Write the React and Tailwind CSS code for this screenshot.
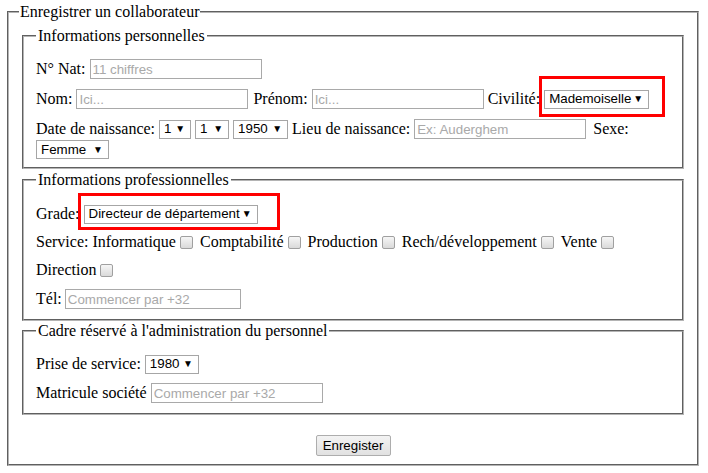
import React from 'react';

const ctrlFont = "font-['Liberation_Sans',Arial,sans-serif] text-[13.33px] text-black";

const TextBox = ({ placeholder, w = 'w-[172px]' }) => (
    <input
        type="text"
        placeholder={placeholder}
        className={`${ctrlFont} ${w} h-[20px] shrink-0 border border-[#a9a9a9] bg-white px-[2px] placeholder:text-[#a9a9a9] outline-none`}
    />
);

const Select = ({ value, w }) => (
    <span className={`${ctrlFont} ${w} h-[19px] shrink-0 inline-flex items-center justify-between border border-[#a6a6a6] bg-white pl-[4px] pr-[5px] leading-none`}>
        <span>{value}</span>
        <span className="text-[10px]">▼</span>
    </span>
);

const Check = ({ last }) => (
    <span className={`inline-block w-[13px] h-[13px] shrink-0 rounded-[2px] border border-[#a0a0a0] bg-gradient-to-b from-[#f6f6f6] to-[#dadada] ${last ? '' : 'mr-[3px]'}`} />
);

const Legend = ({ children, outer }) => (
    <legend className={`leading-[18px] ${outer ? 'ml-[-3px] px-[1px]' : 'px-[2px]'}`}>{children}</legend>
);

const fsBorder = 'border-2 border-[#b4b4b4] [border-style:groove]';

export default function App() {
    return (
        <div className="relative min-h-[473px] bg-white pl-[7px] pr-[9px] pt-[3px] font-['Liberation_Serif','Times_New_Roman',serif] text-[16px] text-black">
            <fieldset className={`${fsBorder} px-[13px] pt-[6px] pb-[8px]`}>
                <Legend outer>Enregistrer un collaborateur</Legend>

                {/* Informations personnelles */}
                <fieldset className={`${fsBorder} px-[12px] pt-[14px] pb-[8px]`}>
                    <Legend>Informations personnelles</Legend>
                    <div className="flex h-[20px] items-center gap-x-[4px]">
                        <span>N° Nat:</span>
                        <TextBox placeholder="11 chiffres" />
                    </div>
                    <div className="mt-[10px] flex h-[20px] items-center gap-x-[4px]">
                        <span>Nom:</span>
                        <TextBox placeholder="Ici..." />
                        <span className="ml-[1px]">Prénom:</span>
                        <TextBox placeholder="Ici..." />
                        <span>Civilité:</span>
                        <Select value="Mademoiselle" w="w-[105px]" />
                    </div>
                    <div className="mt-[10px] flex flex-wrap items-center gap-x-[4px] gap-y-[1px]">
                        <span className="leading-[20px]">Date de naissance:</span>
                        <Select value="1" w="w-[32px]" />
                        <Select value="1" w="w-[34px]" />
                        <Select value="1950" w="w-[55px]" />
                        <span className="leading-[20px]">Lieu de naissance:</span>
                        <TextBox placeholder="Ex: Auderghem" />
                        <span className="ml-[3px] leading-[20px]">Sexe:</span>
                        <Select value="Femme" w="w-[73px]" />
                    </div>
                </fieldset>

                {/* Informations professionnelles */}
                <fieldset className={`${fsBorder} mt-[2px] px-[12px] pt-[15px] pb-[10px]`}>
                    <Legend>Informations professionnelles</Legend>
                    <div className="flex h-[20px] items-center gap-x-[4px]">
                        <span>Grade:</span>
                        <Select value="Directeur de département" w="w-[174px]" />
                    </div>
                    <div className="mt-[8px] flex h-[20px] items-center gap-x-[4px]">
                        <span>Service: Informatique</span>
                        <Check />
                        <span>Comptabilité</span>
                        <Check />
                        <span>Production</span>
                        <Check />
                        <span>Rech/développement</span>
                        <Check />
                        <span>Vente</span>
                        <Check last />
                    </div>
                    <div className="mt-[8px] flex h-[20px] items-center gap-x-[4px]">
                        <span>Direction</span>
                        <Check last />
                    </div>
                    <div className="mt-[9px] flex h-[20px] items-center gap-x-[3px]">
                        <span>Tél:</span>
                        <TextBox placeholder="Commencer par +32" w="w-[176px]" />
                    </div>
                </fieldset>

                {/* Cadre administration */}
                <fieldset className={`${fsBorder} mt-[1px] px-[12px] pt-[14px] pb-[10px]`}>
                    <Legend>Cadre réservé à l'administration du personnel</Legend>
                    <div className="flex h-[20px] items-center gap-x-[4px]">
                        <span>Prise de service:</span>
                        <Select value="1980" w="w-[54px]" />
                    </div>
                    <div className="mt-[9px] flex h-[20px] items-center gap-x-[4px]">
                        <span>Matricule société</span>
                        <TextBox placeholder="Commencer par +32" />
                    </div>
                </fieldset>

                <div className="mt-[20px] flex justify-center">
                    <button
                        type="button"
                        className={`${ctrlFont} h-[21px] w-[75px] rounded-[2px] border border-[#adadad] bg-gradient-to-b from-[#f3f3f3] to-[#e1e1e1]`}
                    >
                        Enregister
                    </button>
                </div>
            </fieldset>

            {/* annotation frames */}
            <div className="absolute left-[539px] top-[76px] h-[41px] w-[126px] border-[3px] border-[#ff0000]" />
            <div className="absolute left-[78px] top-[193px] h-[37px] w-[202px] border-[3px] border-[#ff0000]" />
        </div>
    );
}
